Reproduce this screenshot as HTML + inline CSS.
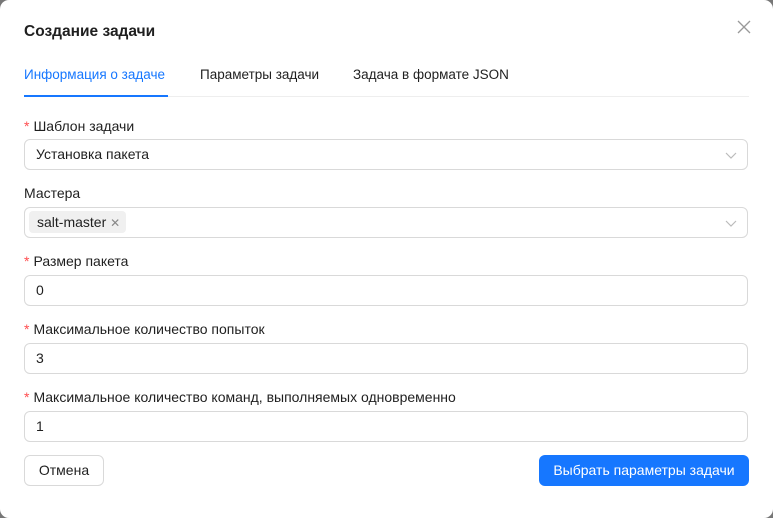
<!DOCTYPE html><html><head><style>
body{margin:0;width:773px;height:518px;background:#777;font-family:"Liberation Sans",sans-serif;overflow:hidden}
.m{position:absolute;left:0;top:0;width:773px;height:518px;background:#fff;border-radius:9px}
.t{position:absolute;left:24px;top:23px;font-size:15.5px;font-weight:bold;color:#1f1f1f}
.x{position:absolute;left:737px;top:20px}
.tab{position:absolute;top:67px;font-size:13.5px;color:#1f1f1f}
.line{position:absolute;left:24px;top:96px;width:725px;height:1px;background:#eee}
.ul{position:absolute;left:24px;top:95px;width:144px;height:2px;background:#1677ff}
.lb{position:absolute;left:24px;font-size:14px;color:#1f1f1f}
.lb b{color:#ff4d4f;font-weight:normal;margin-right:4px}
.in{position:absolute;left:24px;width:722px;height:29px;border:1px solid #d9d9d9;border-radius:6px;font-size:14px;color:#1f1f1f;line-height:29px;box-sizing:content-box}
.in span{margin-left:11px}
.chev{position:absolute;right:10px;top:10px}
.tag{position:absolute;left:4px;top:3px;height:22px;line-height:22px;background:#f0f0f0;border-radius:4px;padding:0 6px 0 8px;font-size:14px}
.btn{position:absolute;top:455px;height:31px;line-height:31px;border-radius:6px;font-size:14px;text-align:center}
</style></head><body><div class="m">
<div class="t">Создание задачи</div>
<svg class="x" width="14" height="14" viewBox="0 0 14 14"><path d="M1 1L13 13M13 1L1 13" stroke="#999" stroke-width="1.3"/></svg>
<div class="tab" style="left:24px;color:#1677ff">Информация о задаче</div>
<div class="tab" style="left:200px">Параметры задачи</div>
<div class="tab" style="left:353px">Задача в формате JSON</div>
<div class="line"></div><div class="ul"></div>
<div class="lb" style="top:118px"><b>*</b>Шаблон задачи</div>
<div class="in" style="top:139px"><span>Установка пакета</span><svg class="chev" width="12" height="10" viewBox="0 0 12 10"><path d="M1 3L6 8L11 3" stroke="#bbb" fill="none" stroke-width="1.2"/></svg></div>
<div class="lb" style="top:185px">Мастера</div>
<div class="in" style="top:207px"><div class="tag">salt-master <span style="margin:0;color:#888;font-size:12px">✕</span></div><svg class="chev" width="12" height="10" viewBox="0 0 12 10"><path d="M1 3L6 8L11 3" stroke="#bbb" fill="none" stroke-width="1.2"/></svg></div>
<div class="lb" style="top:253px"><b>*</b>Размер пакета</div>
<div class="in" style="top:275px"><span>0</span></div>
<div class="lb" style="top:321px"><b>*</b>Максимальное количество попыток</div>
<div class="in" style="top:343px"><span>3</span></div>
<div class="lb" style="top:389px"><b>*</b>Максимальное количество команд, выполняемых одновременно</div>
<div class="in" style="top:411px"><span>1</span></div>
<div class="btn" style="left:24px;width:78px;border:1px solid #d9d9d9;height:29px;line-height:29px;color:#1f1f1f">Отмена</div>
<div class="btn" style="left:539px;width:210px;background:#1677ff;color:#fff">Выбрать параметры задачи</div>
</div></body></html>
